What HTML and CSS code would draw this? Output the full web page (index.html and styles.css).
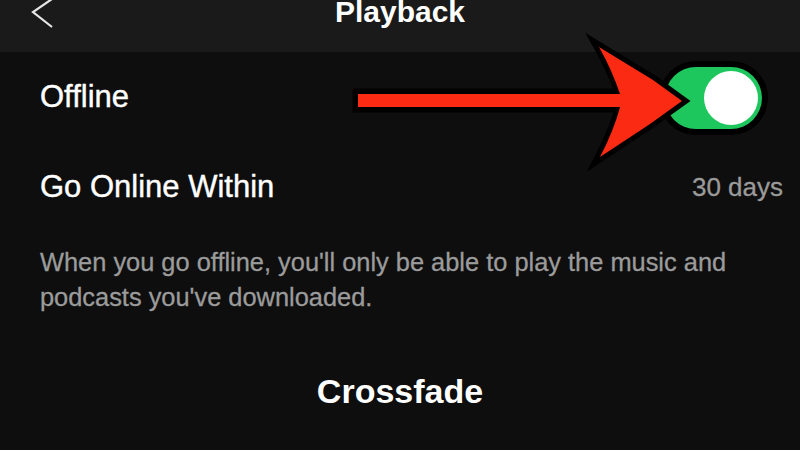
FILE: index.html
```html
<!DOCTYPE html>
<html lang="en">
<head>
    <meta charset="UTF-8">
    <meta name="viewport" content="width=device-width, initial-scale=1.0">
    <title>Playback</title>
    <link rel="stylesheet" href="styles.css">
</head>
<body>
    <div class="screen">
        <div class="topbar">
            <svg class="back" width="24" height="30" viewBox="0 0 24 30">
                <polyline points="21,-1 2,12 21,27" fill="none" stroke="#e6e6e6" stroke-width="2.2"/>
            </svg>
            <h1 class="title">Playback</h1>
        </div>

        <div class="row">
            <span class="row-label">Offline</span>
            <div class="toggle on">
                <div class="knob"></div>
            </div>
        </div>

        <div class="row">
            <span class="row-label">Go Online Within</span>
            <span class="row-value">30 days</span>
        </div>

        <p class="hint">When you go offline, you'll only be able to play the music and podcasts you've downloaded.</p>

        <h2 class="section">Crossfade</h2>

        <!-- red annotation arrow drawn over the screenshot -->
        <svg class="arrow" width="800" height="450" viewBox="0 0 800 450">
            <rect x="358" y="94" width="270" height="13" fill="#fb2a13" stroke="#000" stroke-width="11" paint-order="stroke"/>
            <path d="M599 47 L653 80 L682 101 L650 124 L600 157 Q614 130 620 107 L620 94 Q612 70 599 47 Z"
                  fill="#fb2a13" stroke="#000" stroke-width="10" stroke-miterlimit="10" stroke-linejoin="miter" paint-order="stroke"/>
            <rect x="600" y="94" width="30" height="13" fill="#fb2a13"/>
        </svg>
    </div>
</body>
</html>
```

FILE: styles.css
```css
body {
    margin: 0;
    padding: 0;
    background-color: #0e0e0e;
    font-family: "Liberation Sans", Arial, sans-serif;
    color: #fff;
}

.screen {
    position: relative;
    width: 800px;
    height: 450px;
    overflow: hidden;
    background-color: #0e0e0e;
}

.topbar {
    position: relative;
    height: 52px;
    background-color: #1a1a1a;
    display: flex;
    justify-content: center;
    align-items: flex-start;
}

.back {
    position: absolute;
    left: 31px;
    top: 0;
}

.title {
    margin: 0;
    font-size: 30px;
    line-height: 23px;
    font-weight: bold;
}

.row {
    height: 90px;
    display: flex;
    align-items: center;
    justify-content: space-between;
    padding: 0 17px 0 40px;
}

.row-label {
    font-size: 31px;
    line-height: 90px;
    -webkit-text-stroke: 0.4px #fff;
}

.row-value {
    font-size: 26px;
    color: #9a9a9a;
    -webkit-text-stroke: 0.3px #9a9a9a;
}

.toggle {
    width: 97px;
    height: 62px;
    box-sizing: border-box;
    padding: 4px;
    margin-right: 21px;
    margin-top: 2px;
    border-radius: 31px;
    background-color: #444;
    box-shadow: 0 0 0 6px #000;
    display: flex;
    justify-content: flex-start;
}

.toggle.on {
    background-color: #1ec65e;
    justify-content: flex-end;
}

.knob {
    width: 54px;
    height: 54px;
    border-radius: 50%;
    background-color: #fff;
}

.hint {
    margin: 13px 0 0;
    padding: 0 40px;
    font-size: 25.4px;
    line-height: 35px;
    color: #9b9b9b;
    -webkit-text-stroke: 0.3px #9b9b9b;
}

.section {
    margin: 56px 0 0;
    text-align: center;
    font-size: 34px;
    line-height: 40px;
    font-weight: bold;
}

.arrow {
    position: absolute;
    left: 0;
    top: 0;
    pointer-events: none;
}
```
